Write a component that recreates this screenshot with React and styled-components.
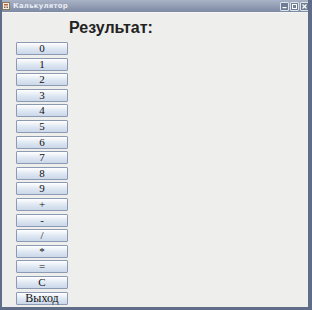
import styled, { createGlobalStyle } from "styled-components";

const GlobalStyle = createGlobalStyle`
  html, body {
    margin: 0;
    padding: 0;
    background: #eeeeec;
  }
`;

const keys = ["0", "1", "2", "3", "4", "5", "6", "7", "8", "9", "+", "-", "/", "*", "=", "C", "Выход"];

const App = () => {
  return (
    <>
      <GlobalStyle />
      <StyledWindow>
        <TitleBar>
          <div className="title">
            <AppIcon viewBox="0 0 8 8">
              <rect x="0.5" y="0.5" width="7" height="7" fill="#f4f1e8" stroke="#8c7a5a" />
              <rect x="2" y="2" width="4" height="1.5" fill="#c0603a" />
              <rect x="2" y="4.5" width="1.5" height="1.5" fill="#7a6a50" />
              <rect x="4.5" y="4.5" width="1.5" height="1.5" fill="#7a6a50" />
            </AppIcon>
            <span>Калькулятор</span>
          </div>
          <div className="controls">
            <WinButton>
              <svg viewBox="0 0 7 7">
                <rect x="1.5" y="4" width="4" height="1.2" fill="#fff" />
              </svg>
            </WinButton>
            <WinButton>
              <svg viewBox="0 0 7 7">
                <rect x="1.5" y="1.5" width="4" height="4" fill="none" stroke="#fff" strokeWidth="1" />
              </svg>
            </WinButton>
            <WinButton>
              <svg viewBox="0 0 7 7">
                <path d="M1.5 1.5 L5.5 5.5 M5.5 1.5 L1.5 5.5" stroke="#fff" strokeWidth="1.2" />
              </svg>
            </WinButton>
          </div>
        </TitleBar>
        <Body>
          <Heading>Результат:</Heading>
          <Keypad>
            {keys.map((k) => (
              <Key key={k} $wide={k.length > 1}>
                {k}
              </Key>
            ))}
          </Keypad>
        </Body>
      </StyledWindow>
    </>
  );
};

const StyledWindow = styled.div`
  width: 312px;
  height: 310px;
  box-sizing: border-box;
  display: flex;
  flex-direction: column;
  background: #eeeeec;
  border-left: 2px solid #5f6d88;
  border-right: 4px solid #5f6d88;
  border-bottom: 3px solid #5f6d88;
  overflow: hidden;
`;

const TitleBar = styled.div`
  height: 12px;
  flex-shrink: 0;
  display: flex;
  align-items: center;
  justify-content: space-between;
  background: linear-gradient(#a9b2c6, #7d8aa3);
  border-bottom: 1px solid #f6f6f6;
  margin-left: -2px;
  margin-right: -4px;
  padding: 0 3px 0 2px;

  .title {
    display: flex;
    align-items: center;
    gap: 3px;
    font-family: "DejaVu Sans", sans-serif;
    font-size: 7px;
    font-weight: bold;
    color: #e8ecf3;
    letter-spacing: 0.2px;
  }
  .controls {
    display: flex;
    gap: 1px;
  }
`;

const AppIcon = styled.svg`
  width: 8px;
  height: 8px;
`;

const WinButton = styled.div`
  width: 7px;
  height: 7px;
  background: #6f7c96;
  border: 1px solid #dfe3ea;
  border-radius: 1px;
  display: flex;

  svg {
    width: 7px;
    height: 7px;
  }
`;

const Body = styled.div`
  flex: 1;
  padding: 4px 0 0 14px;
`;

const Heading = styled.h1`
  margin: 0 0 4px 53px;
  height: 21px;
  font-family: "Liberation Sans", Arial, sans-serif;
  font-size: 16px;
  font-weight: bold;
  line-height: 22px;
  color: #222;
`;

const Keypad = styled.div`
  display: flex;
  flex-direction: column;
  gap: 2.6px;
  width: 52px;
`;

const Key = styled.button`
  height: 13px;
  padding: 0;
  box-sizing: border-box;
  border: 1px solid #8c9bb3;
  border-radius: 1px;
  background: linear-gradient(#ffffff, #dde6f2 55%, #cbd8ea);
  font-family: "Liberation Serif", "Times New Roman", serif;
  font-size: ${(p) => (p.$wide ? "12px" : "11px")};
  line-height: 11px;
  color: #111;
`;

export default App;
